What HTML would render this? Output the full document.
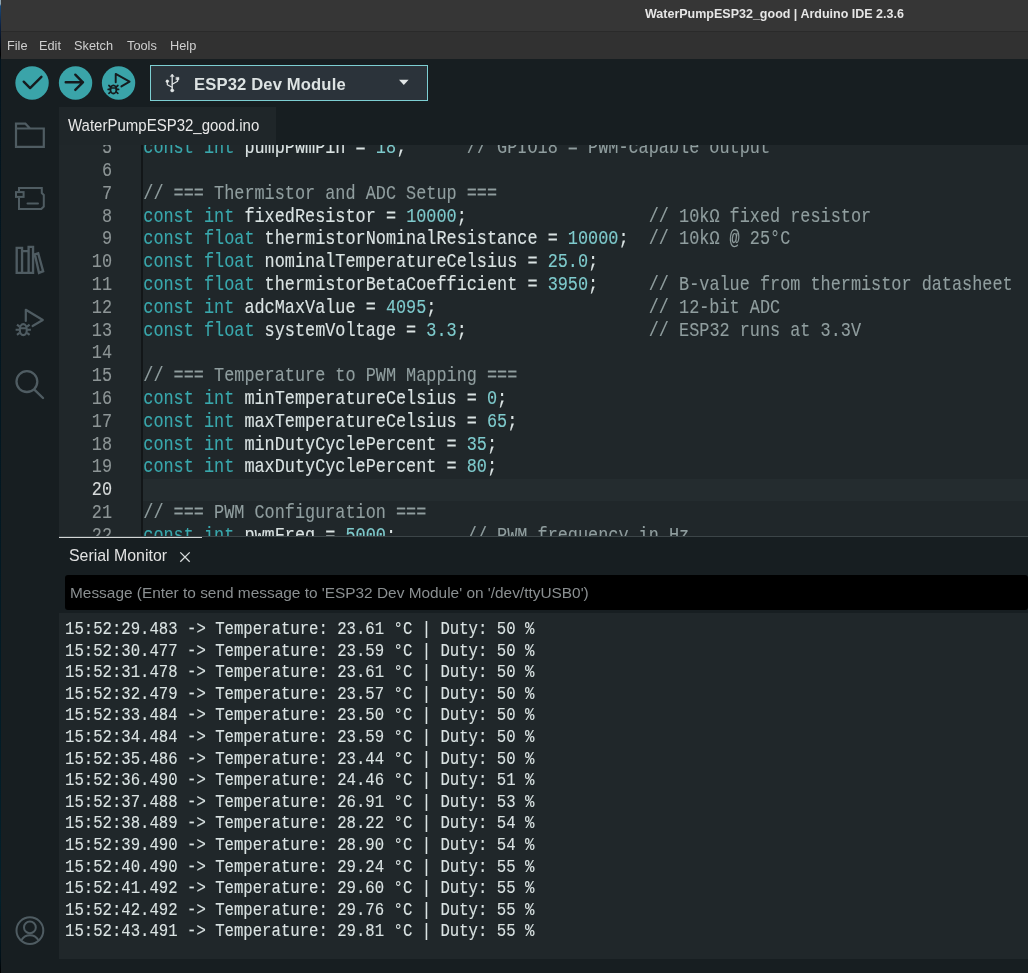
<!DOCTYPE html>
<html><head><meta charset="utf-8">
<style>
*{margin:0;padding:0;box-sizing:border-box}
html,body{width:1028px;height:973px;overflow:hidden;background:#171e21;position:relative;font-family:"Liberation Sans",sans-serif}
.abs{position:absolute}
body>div{will-change:transform}
#edge{left:0;top:0;width:1px;height:973px;background:linear-gradient(#8fa4b0 0,#8fa4b0 4px,#1b4a7a 6px,#0c2244 25px,#000 55px,#03141e 60px,#021822 500px,#02202b 900px,#011018 958px,#000 973px)}
#title{left:1px;top:0;width:1027px;height:32px;background:#363636;border-bottom:1px solid #2a2a2a}
#titletext{left:645px;top:6.5px;font-size:12.5px;font-weight:bold;color:#e6e6e6;white-space:pre;transform-origin:0 11px;transform:scaleY(1.06)}
#menu{left:1px;top:32px;width:1027px;height:27px;background:#313131}
.mi{position:absolute;top:5.7px;font-size:12.75px;color:#cfcfcf}
#toolbar{left:1px;top:59px;width:1027px;height:48px;background:#171e21}
#board{left:150px;top:65px;width:278px;height:36px;background:#2b333a;border:1px solid #7dcfd3}
#boardtext{left:194px;top:74.8px;font-size:16.6px;letter-spacing:0.15px;font-weight:bold;color:#dde3e3;white-space:pre}
#tab{left:59px;top:107px;width:217px;height:38px;background:#1f2629}
#tabtext{left:68px;top:116.8px;font-size:15px;color:#e8e8e8;white-space:pre;transform-origin:0 13.5px;transform:scaleY(1.1)}
#editor{left:59px;top:144.5px;width:969px;height:391.5px;background:#20272a;overflow:hidden}
#curline{left:84px;top:333.6px;width:885px;height:22.8px;background:#242c2f}
#gutline{left:82px;top:0;width:2px;height:400px;background:#121618}
.ln,.cl,.sl{-webkit-text-stroke:0.1px currentColor}
.ln,.cl{position:absolute;height:22.8px;line-height:22.8px;font-family:"Liberation Mono",monospace;font-size:16.85px;white-space:pre;padding-top:1.5px;transform-origin:0 17.5px;transform:scaleY(1.2)}
.ln{left:0;width:53px;text-align:right;color:#8d9596}
.ln.cur{color:#d6dada}
.cl{left:84.3px;color:#dae3e3}
.k{color:#39a8ad}
.n{color:#7fcbcd}
.c{color:#909e9f}
#sep{left:59px;top:536px;width:969px;height:1px;background:#3c4548}
#panelhdr{left:59px;top:537px;width:969px;height:38px;background:#171e21}
#paneltab{left:59px;top:537px;width:143px;height:1.3px;background:#d4d6d6}
#smtext{left:68.5px;top:546.8px;font-size:15.9px;color:#e2e2e2;white-space:pre}
#input{left:65px;top:575px;width:963px;height:35px;background:#000;border-radius:3px}
#ph{left:70.3px;top:583.8px;font-size:15.42px;color:#8a8f91;white-space:pre}
#output{left:59px;top:613px;width:969px;height:346px;background:#20272a;overflow:hidden}
#serial{left:6px;top:7px;width:960px;height:340px}
.sl{position:absolute;left:0;height:21.6px;line-height:21.6px;font-family:"Liberation Mono",monospace;font-size:15.65px;white-space:pre;color:#dae3e3;transform-origin:0 14px;transform:scaleY(1.2)}
#status{left:1px;top:959px;width:1027px;height:14px;background:#171e21}
#icons{left:0;top:0;width:1028px;height:973px;pointer-events:none}
</style></head><body>
<div id="edge" class="abs"></div>
<div id="title" class="abs"></div>
<div id="menu" class="abs"></div>
<div id="toolbar" class="abs"></div>
<div id="board" class="abs"></div>
<div id="tab" class="abs"></div>
<div id="editor" class="abs">
<div id="curline" class="abs"></div>
<div id="gutline" class="abs"></div>
<div class="ln" style="top:-8.90px">5</div>
<div class="ln" style="top:13.90px">6</div>
<div class="ln" style="top:36.70px">7</div>
<div class="ln" style="top:59.50px">8</div>
<div class="ln" style="top:82.30px">9</div>
<div class="ln" style="top:105.10px">10</div>
<div class="ln" style="top:127.90px">11</div>
<div class="ln" style="top:150.70px">12</div>
<div class="ln" style="top:173.50px">13</div>
<div class="ln" style="top:196.30px">14</div>
<div class="ln" style="top:219.10px">15</div>
<div class="ln" style="top:241.90px">16</div>
<div class="ln" style="top:264.70px">17</div>
<div class="ln" style="top:287.50px">18</div>
<div class="ln" style="top:310.30px">19</div>
<div class="ln cur" style="top:333.10px">20</div>
<div class="ln" style="top:355.90px">21</div>
<div class="ln" style="top:378.70px">22</div>
<div class="cl" style="top:-8.90px"><span class="k">const</span> <span class="k">int</span> pumpPwmPin = <span class="n">18</span>;      <span class="c">// GPIO18 = PWM-capable output</span></div>
<div class="cl" style="top:13.90px"></div>
<div class="cl" style="top:36.70px"><span class="c">// === Thermistor and ADC Setup ===</span></div>
<div class="cl" style="top:59.50px"><span class="k">const</span> <span class="k">int</span> fixedResistor = <span class="n">10000</span>;                  <span class="c">// 10kΩ fixed resistor</span></div>
<div class="cl" style="top:82.30px"><span class="k">const</span> <span class="k">float</span> thermistorNominalResistance = <span class="n">10000</span>;  <span class="c">// 10kΩ @ 25°C</span></div>
<div class="cl" style="top:105.10px"><span class="k">const</span> <span class="k">float</span> nominalTemperatureCelsius = <span class="n">25.0</span>;</div>
<div class="cl" style="top:127.90px"><span class="k">const</span> <span class="k">float</span> thermistorBetaCoefficient = <span class="n">3950</span>;     <span class="c">// B-value from thermistor datasheet</span></div>
<div class="cl" style="top:150.70px"><span class="k">const</span> <span class="k">int</span> adcMaxValue = <span class="n">4095</span>;                     <span class="c">// 12-bit ADC</span></div>
<div class="cl" style="top:173.50px"><span class="k">const</span> <span class="k">float</span> systemVoltage = <span class="n">3.3</span>;                  <span class="c">// ESP32 runs at 3.3V</span></div>
<div class="cl" style="top:196.30px"></div>
<div class="cl" style="top:219.10px"><span class="c">// === Temperature to PWM Mapping ===</span></div>
<div class="cl" style="top:241.90px"><span class="k">const</span> <span class="k">int</span> minTemperatureCelsius = <span class="n">0</span>;</div>
<div class="cl" style="top:264.70px"><span class="k">const</span> <span class="k">int</span> maxTemperatureCelsius = <span class="n">65</span>;</div>
<div class="cl" style="top:287.50px"><span class="k">const</span> <span class="k">int</span> minDutyCyclePercent = <span class="n">35</span>;</div>
<div class="cl" style="top:310.30px"><span class="k">const</span> <span class="k">int</span> maxDutyCyclePercent = <span class="n">80</span>;</div>
<div class="cl" style="top:333.10px"></div>
<div class="cl" style="top:355.90px"><span class="c">// === PWM Configuration ===</span></div>
<div class="cl" style="top:378.70px"><span class="k">const</span> <span class="k">int</span> pwmFreq = <span class="n">5000</span>;       <span class="c">// PWM frequency in Hz</span></div>
</div>
<div id="sep" class="abs"></div>
<div id="panelhdr" class="abs"></div>
<div id="paneltab" class="abs"></div>
<div id="input" class="abs"></div>
<div id="output" class="abs"><div id="serial" class="abs">
<div class="sl" style="top:0.00px">15:52:29.483 -&gt; Temperature: 23.61 °C | Duty: 50 %</div>
<div class="sl" style="top:21.60px">15:52:30.477 -&gt; Temperature: 23.59 °C | Duty: 50 %</div>
<div class="sl" style="top:43.20px">15:52:31.478 -&gt; Temperature: 23.61 °C | Duty: 50 %</div>
<div class="sl" style="top:64.80px">15:52:32.479 -&gt; Temperature: 23.57 °C | Duty: 50 %</div>
<div class="sl" style="top:86.40px">15:52:33.484 -&gt; Temperature: 23.50 °C | Duty: 50 %</div>
<div class="sl" style="top:108.00px">15:52:34.484 -&gt; Temperature: 23.59 °C | Duty: 50 %</div>
<div class="sl" style="top:129.60px">15:52:35.486 -&gt; Temperature: 23.44 °C | Duty: 50 %</div>
<div class="sl" style="top:151.20px">15:52:36.490 -&gt; Temperature: 24.46 °C | Duty: 51 %</div>
<div class="sl" style="top:172.80px">15:52:37.488 -&gt; Temperature: 26.91 °C | Duty: 53 %</div>
<div class="sl" style="top:194.40px">15:52:38.489 -&gt; Temperature: 28.22 °C | Duty: 54 %</div>
<div class="sl" style="top:216.00px">15:52:39.490 -&gt; Temperature: 28.90 °C | Duty: 54 %</div>
<div class="sl" style="top:237.60px">15:52:40.490 -&gt; Temperature: 29.24 °C | Duty: 55 %</div>
<div class="sl" style="top:259.20px">15:52:41.492 -&gt; Temperature: 29.60 °C | Duty: 55 %</div>
<div class="sl" style="top:280.80px">15:52:42.492 -&gt; Temperature: 29.76 °C | Duty: 55 %</div>
<div class="sl" style="top:302.40px">15:52:43.491 -&gt; Temperature: 29.81 °C | Duty: 55 %</div>
</div></div>
<div id="status" class="abs"></div>
<svg id="icons" class="abs" width="1028" height="973" viewBox="0 0 1028 973">
 <g fill="#3aa4a9">
  <circle cx="32.05" cy="83" r="16.7"/>
  <circle cx="75.55" cy="83" r="16.7"/>
  <circle cx="118.55" cy="83" r="16.7"/>
 </g>
 <g fill="none" stroke="#161b1e" stroke-linecap="round" stroke-linejoin="round">
  <path d="M23.7 81.7 L30.1 88.1 L41.4 76.8" stroke-width="2.4"/>
  <path d="M65.7 82.2 H83 M75.3 74.7 L82.9 82.3 L75.3 89.9" stroke-width="2.4"/>
  <path d="M115.7 82.3 V73.9 L129.6 81.6 L121.4 86.4" stroke-width="1.9"/>
  <ellipse cx="113.4" cy="89.4" rx="3" ry="4.1" stroke-width="1.8"/>
  <path d="M110.5 88 H116.3 M108.2 89.4 H110.5 M116.3 89.4 H118.6 M108.9 85.5 L110.6 87 M117.9 85.5 L116.2 87 M108.9 93.3 L110.6 91.8 M117.9 93.3 L116.2 91.8" stroke-width="1.7"/>
 </g>
 <!-- usb -->
 <g fill="#e2e6e6" stroke="#e2e6e6" stroke-linecap="round" stroke-linejoin="round">
  <path d="M172.2 76 V89.5" stroke-width="1.3" fill="none"/>
  <path d="M170.5 76.3 L172.2 74 L173.9 76.3 Z" stroke-width="0.6"/>
  <rect x="176.2" y="77.3" width="2.8" height="2.6" stroke-width="0.4"/>
  <path d="M177.6 79.8 V81.3 L172.2 84.3 M167.3 81.5 V84.7 L172.2 87.3" stroke-width="1.2" fill="none"/>
  <circle cx="167.3" cy="81.3" r="1.45" stroke-width="0.3"/>
  <circle cx="172.2" cy="90.4" r="1.7" stroke-width="0.3"/>
 </g>
 <path d="M399 79.8 H408.6 L403.8 85.1 Z" fill="#e2e6e6"/>
 <!-- activity bar -->
 <g fill="none" stroke="#4f5c62" stroke-width="2" stroke-linejoin="miter">
  <path d="M16 146.9 V123.7 H25.4 L30 128.5 H43.8 V146.9 Z M16 128.5 H30" stroke-width="2.2"/>
  <path d="M19 191.1 V188 H41.8 V193 L43.8 195 V206.5 L41.3 209 H19 V197.9"/>
  <rect x="16" y="192.1" width="7.6" height="4.8"/>
  <path d="M27.5 203.5 H38" stroke-linecap="round"/>
  <path d="M16.7 272.85 V247.8 H22.05 V272.85 Z M22.05 251.1 H28.6 V272.85 M28.6 272.85 V246.9 H33.05 V272.85 Z M16.7 272.85 H33.05 M34.9 254.4 L38.2 253.35 L43.15 271.2 L39 272.85 Z" stroke-width="2.35"/>
  <path d="M25.8 321 V309.8 L42.8 320 L32.6 326" stroke-width="2.2" stroke-linecap="round" stroke-linejoin="round"/>
  <ellipse cx="23.3" cy="329.7" rx="3.5" ry="5.5" stroke-width="2.2"/>
  <path d="M19.9 328.2 H26.7 M15.6 329.7 H19.5 M27.1 329.7 H30.9 M17 324.6 L19.6 326.6 M29.6 324.6 L27 326.6 M17 334.8 L19.6 332.8 M29.6 334.8 L27 332.8" stroke-width="2.1"/>
  <circle cx="26.9" cy="381.6" r="10.4" stroke-width="2.3"/>
  <path d="M34.6 389.9 L43 398" stroke-width="2.4" stroke-linecap="round"/>
  <circle cx="29.9" cy="930.6" r="13.4" stroke-width="2"/>
  <circle cx="29.9" cy="927.4" r="5.9" stroke-width="2"/>
  <path d="M21.5 940 A9.8 9.8 0 0 1 38.3 940" stroke-width="2"/>
 </g>
 <path d="M180.3 552.4 L189.7 561.8 M189.7 552.4 L180.3 561.8" stroke="#d8dcdc" stroke-width="1.3" fill="none"/>
</svg>
<div id="titletext" class="abs">WaterPumpESP32_good | Arduino IDE 2.3.6</div>
<div class="abs" style="left:0.3px;top:32px">
 <span class="mi" style="left:7px">File</span>
 <span class="mi" style="left:39px">Edit</span>
 <span class="mi" style="left:74px">Sketch</span>
 <span class="mi" style="left:127px">Tools</span>
 <span class="mi" style="left:170px">Help</span>
</div>
<div id="boardtext" class="abs">ESP32 Dev Module</div>
<div id="tabtext" class="abs">WaterPumpESP32_good.ino</div>
<div id="smtext" class="abs">Serial Monitor</div>
<div id="ph" class="abs">Message (Enter to send message to 'ESP32 Dev Module' on '/dev/ttyUSB0')</div>
</body></html>
